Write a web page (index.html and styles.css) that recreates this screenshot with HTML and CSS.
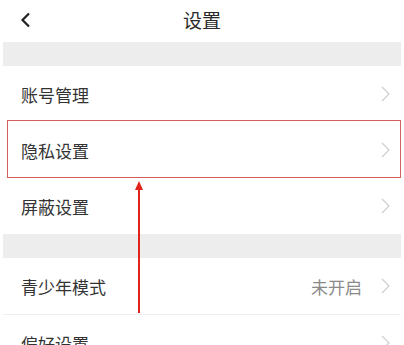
FILE: index.html
```html
<!DOCTYPE html>
<html lang="zh-CN">
<head>
    <meta charset="UTF-8">
    <meta name="viewport" content="width=device-width, initial-scale=1.0">
    <title>设置</title>
    <link rel="stylesheet" href="styles.css">
</head>
<body>
    <div class="page">
        <div class="header">
            <svg class="back" width="12" height="16" viewBox="0 0 12 16">
                <polyline points="9,1.5 2.5,8 9,14.5" fill="none" stroke="#222" stroke-width="2.2" stroke-linejoin="miter"/>
            </svg>
            <div class="title">设置</div>
        </div>

        <div class="gap"></div>

        <div class="row">
            <span class="label">账号管理</span>
            <svg class="more" width="9" height="16" viewBox="0 0 9 16"><polyline points="1,1 8,8 1,15" fill="none" stroke="#cfcfcf" stroke-width="1.2"/></svg>
        </div>
        <div class="row marked">
            <span class="label">隐私设置</span>
            <svg class="more" width="9" height="16" viewBox="0 0 9 16"><polyline points="1,1 8,8 1,15" fill="none" stroke="#cfcfcf" stroke-width="1.2"/></svg>
            <div class="highlight"></div>
        </div>
        <div class="row">
            <span class="label">屏蔽设置</span>
            <svg class="more" width="9" height="16" viewBox="0 0 9 16"><polyline points="1,1 8,8 1,15" fill="none" stroke="#cfcfcf" stroke-width="1.2"/></svg>
        </div>

        <div class="gap"></div>

        <div class="row divided">
            <span class="label">青少年模式</span>
            <span class="value">未开启</span>
            <svg class="more" width="9" height="16" viewBox="0 0 9 16"><polyline points="1,1 8,8 1,15" fill="none" stroke="#cfcfcf" stroke-width="1.2"/></svg>
        </div>
        <div class="row">
            <span class="label">偏好设置</span>
            <svg class="more" width="9" height="16" viewBox="0 0 9 16"><polyline points="1,1 8,8 1,15" fill="none" stroke="#cfcfcf" stroke-width="1.2"/></svg>
        </div>

        <div class="arrow"></div>
    </div>
</body>
</html>
```

FILE: styles.css
```css
body {
    margin: 0;
    background-color: #fff;
    font-family: "Noto Sans CJK SC", "Noto Sans", sans-serif;
    color: #333;
    overflow: hidden;
}
.page {
    position: relative;
    padding: 0 3px;
}
.header {
    position: relative;
    height: 42px;
    display: flex;
    align-items: center;
    justify-content: center;
}
.back {
    position: absolute;
    left: 17px;
    top: 12px;
}
.title {
    font-size: 19px;
    color: #2a2a2a;
    line-height: 1;
    margin-top: -3px;
}
.gap {
    height: 24px;
    background-color: #ededed;
}
.row {
    position: relative;
    height: 56px;
    display: flex;
    align-items: center;
    padding: 0 11px 0 18px;
}
.row.divided {
    border-bottom: 1px solid #f0f0f0;
}
.label {
    flex: 1;
    font-size: 17px;
    color: #333;
}
.value {
    font-size: 17px;
    color: #8a8a8a;
    margin-right: 19px;
}
.highlight {
    position: absolute;
    left: 4px;
    right: 0;
    top: -2px;
    bottom: 0;
    border: 1.5px solid #d4605c;
}
.arrow {
    position: absolute;
    left: 138px;
    top: 183px;
    width: 2px;
    height: 130px;
    background-color: #e0241c;
}
.arrow::before {
    content: "";
    position: absolute;
    left: -3px;
    top: -2px;
    border-left: 4px solid transparent;
    border-right: 4px solid transparent;
    border-bottom: 9px solid #e0241c;
}
```
